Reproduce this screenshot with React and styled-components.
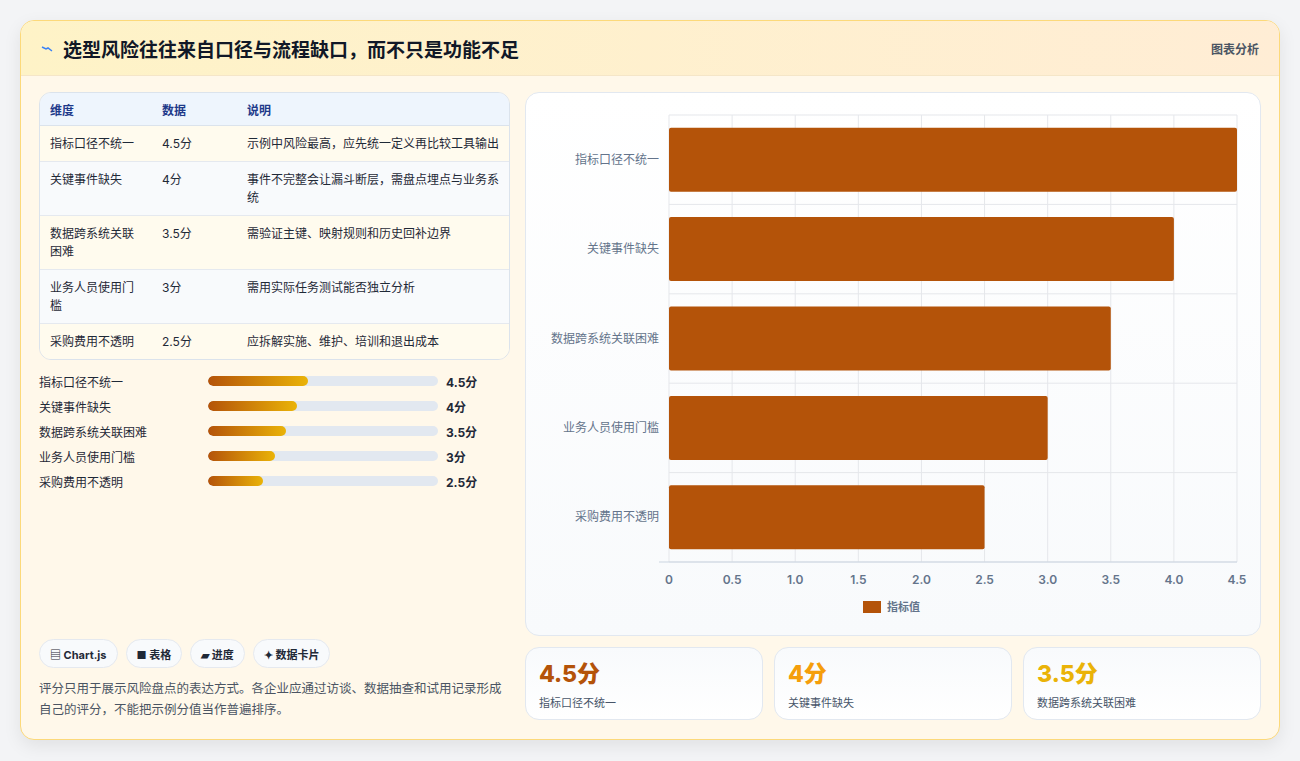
import React from 'react'
import styled, { createGlobalStyle } from 'styled-components'

const Global = createGlobalStyle`
  body { margin: 0; background: #f3f4f6; font-family: "Inter", "Noto Sans CJK SC", sans-serif; }
  * { box-sizing: border-box; }
`

const Page = styled.div`
  padding: 20px 20px 21px;
  height: 761px;
`

const Card = styled.div`
  height: 720px;
  border: 1px solid #fcd97a;
  border-radius: 14px;
  background: #fff8ea;
  box-shadow: 0 6px 18px rgba(0,0,0,0.08);
  overflow: hidden;
  display: flex;
  flex-direction: column;
`

const Header = styled.div`
  height: 56px;
  background: linear-gradient(90deg, #fef3c7, #ffedd5);
  border-bottom: 1px solid #f5e6c8;
  display: flex;
  align-items: center;
  justify-content: space-between;
  padding: 0 20px;
  & > h1 {
    margin: 0;
    font-size: 19px;
    font-weight: 700;
    color: #111827;
    display: flex;
    align-items: center;
    gap: 10px;
  }
  & > span {
    font-size: 12px;
    font-weight: 700;
    color: #4b5563;
  }
`

const Body = styled.div`
  flex: 1;
  display: grid;
  grid-template-columns: 471px 736px;
  gap: 15px;
  padding: 16px 19px 19px 18px;
`

const Left = styled.div`
  display: flex;
  flex-direction: column;
`

const Table = styled.table`
  width: 100%;
  border-collapse: separate;
  border-spacing: 0;
  border: 1px solid #dbe3ec;
  border-radius: 12px;
  overflow: hidden;
  font-size: 12px;
  color: #1f2937;
  th {
    background: #eef5fd;
    color: #1e3a8a;
    font-weight: 600;
    text-align: left;
    height: 33px;
    padding: 0 10px;
    border-bottom: 1px solid #dbe3ec;
  }
  td {
    vertical-align: top;
    padding: 9px 10px 8px;
    line-height: 18px;
    border-bottom: 1px solid #e5e9ef;
  }
  tr:last-child td { border-bottom: none; }
  tbody tr:nth-child(odd) td { background: #fffbee; }
  tbody tr:nth-child(even) td { background: #f8fafc; }
`

const Bars = styled.div`
  margin-top: 12px;
  display: flex;
  flex-direction: column;
  gap: 7px;
`

const BarRow = styled.div`
  display: grid;
  grid-template-columns: 169px 230px auto;
  align-items: center;
  gap: 0;
  font-size: 12px;
  color: #1f2937;
  height: 18px;
  & > b { padding-left: 8px; font-weight: 700; }
`

const Track = styled.div`
  height: 10px;
  border-radius: 5px;
  background: #e2e8f0;
  overflow: hidden;
`

const Fill = styled.div`
  height: 100%;
  border-radius: 5px;
  background: linear-gradient(90deg, #b45309, #eab308);
`

const Chips = styled.div`
  margin-top: auto;
  display: flex;
  gap: 8px;
`

const Chip = styled.span`
  height: 29px;
  padding: 0 10px;
  border-radius: 15px;
  border: 1px solid #e5e9ef;
  background: #f8fafc;
  font-size: 11px;
  font-weight: 700;
  color: #1f2937;
  display: flex;
  align-items: center;
  gap: 3px;
`

const Note = styled.p`
  margin: 10px 0 0;
  font-size: 12.5px;
  line-height: 21px;
  color: #4b5563;
`

const Right = styled.div`
  display: flex;
  flex-direction: column;
  gap: 11px;
`

const ChartBox = styled.div`
  height: 544px;
  border: 1px solid #e2e8f0;
  border-radius: 14px;
  background: linear-gradient(180deg, #fff, #f8fafc);
`

const Stats = styled.div`
  display: grid;
  grid-template-columns: repeat(3, 1fr);
  gap: 11px;
`

const Stat = styled.div`
  height: 73px;
  border: 1px solid #e2e8f0;
  border-radius: 14px;
  background: linear-gradient(180deg, #f8fafc, #fff);
  padding: 12px 13px;
  & > strong {
    display: block;
    font-size: 23px;
    font-weight: 800;
    line-height: 28px;
    color: ${p => p.$color};
  }
  & > span {
    display: block;
    margin-top: 6px;
    font-size: 11px;
    color: #475569;
  }
`

const rows = [
  ['指标口径不统一', '4.5分', '示例中风险最高，应先统一定义再比较工具输出', 4.5],
  ['关键事件缺失', '4分', '事件不完整会让漏斗断层，需盘点埋点与业务系统', 4],
  ['数据跨系统关联困难', '3.5分', '需验证主键、映射规则和历史回补边界', 3.5],
  ['业务人员使用门槛', '3分', '需用实际任务测试能否独立分析', 3],
  ['采购费用不透明', '2.5分', '应拆解实施、维护、培训和退出成本', 2.5],
]

const Chart = () => {
  const x0 = 143, x1 = 711, top = 22, step = 89.4
  const sx = v => x0 + (v / 4.5) * (x1 - x0)
  const ticks = [0, 0.5, 1, 1.5, 2, 2.5, 3, 3.5, 4, 4.5]
  return (
    <svg width="736" height="544" style={{ display: 'block' }}>
      {ticks.map(t => (
        <line key={t} x1={sx(t)} x2={sx(t)} y1={top} y2={469} stroke="#e5e7eb" />
      ))}
      {[0, 1, 2, 3, 4, 5].map(i => (
        <line key={i} x1={x0} x2={x1} y1={top + i * step} y2={top + i * step} stroke="#e5e7eb" />
      ))}
      <line x1={x0 - 10} x2={x1} y1={469} y2={469} stroke="#cbd5e1" />
      {rows.map((r, i) => {
        const cy = top + i * step + step / 2
        return (
          <g key={r[0]}>
            <rect x={x0} y={cy - 32} width={sx(r[3]) - x0} height={64} fill="#b45309" rx="2" />
            <text x={x0 - 10} y={cy + 4} textAnchor="end" fontSize="12" fill="#64748b" fontFamily="Inter, Noto Sans CJK SC, sans-serif">{r[0]}</text>
          </g>
        )
      })}
      {ticks.map(t => (
        <text key={t} x={sx(t)} y={491} textAnchor="middle" fontSize="12" fontWeight="600" fill="#64748b" fontFamily="Inter, sans-serif">
          {t === 0 ? '0' : t.toFixed(1)}
        </text>
      ))}
      <rect x="337" y="508" width="18" height="12" fill="#b45309" />
      <text x="361" y="518" fontSize="11" fill="#64748b" fontWeight="600" fontFamily="Inter, Noto Sans CJK SC, sans-serif">指标值</text>
    </svg>
  )
}

const Icon = () => (
  <svg width="12" height="10" viewBox="0 0 12 10">
    <path d="M1 4 L5 6 L7 5 L11 8" stroke="#3b82f6" strokeWidth="1.5" fill="none" />
  </svg>
)

const App = () => (
  <Page>
    <Global />
    <Card>
      <Header>
        <h1><Icon />选型风险往往来自口径与流程缺口，而不只是功能不足</h1>
        <span>图表分析</span>
      </Header>
      <Body>
        <Left>
          <Table>
            <colgroup>
              <col style={{ width: 112 }} />
              <col style={{ width: 85 }} />
              <col />
            </colgroup>
            <thead>
              <tr><th>维度</th><th>数据</th><th>说明</th></tr>
            </thead>
            <tbody>
              {rows.map(r => (
                <tr key={r[0]}><td>{r[0]}</td><td>{r[1]}</td><td>{r[2]}</td></tr>
              ))}
            </tbody>
          </Table>
          <Bars>
            {rows.map(r => (
              <BarRow key={r[0]}>
                <span>{r[0]}</span>
                <Track><Fill style={{ width: `${r[3] * 9.65}%` }} /></Track>
                <b>{r[1]}</b>
              </BarRow>
            ))}
          </Bars>
          <Chips>
            <Chip>▤ Chart.js</Chip>
            <Chip>■ 表格</Chip>
            <Chip>▰ 进度</Chip>
            <Chip>✦ 数据卡片</Chip>
          </Chips>
          <Note>评分只用于展示风险盘点的表达方式。各企业应通过访谈、数据抽查和试用记录形成自己的评分，不能把示例分值当作普遍排序。</Note>
        </Left>
        <Right>
          <ChartBox><Chart /></ChartBox>
          <Stats>
            <Stat $color="#b45309"><strong>4.5分</strong><span>指标口径不统一</span></Stat>
            <Stat $color="#f59e0b"><strong>4分</strong><span>关键事件缺失</span></Stat>
            <Stat $color="#eab308"><strong>3.5分</strong><span>数据跨系统关联困难</span></Stat>
          </Stats>
        </Right>
      </Body>
    </Card>
  </Page>
)

export default App
